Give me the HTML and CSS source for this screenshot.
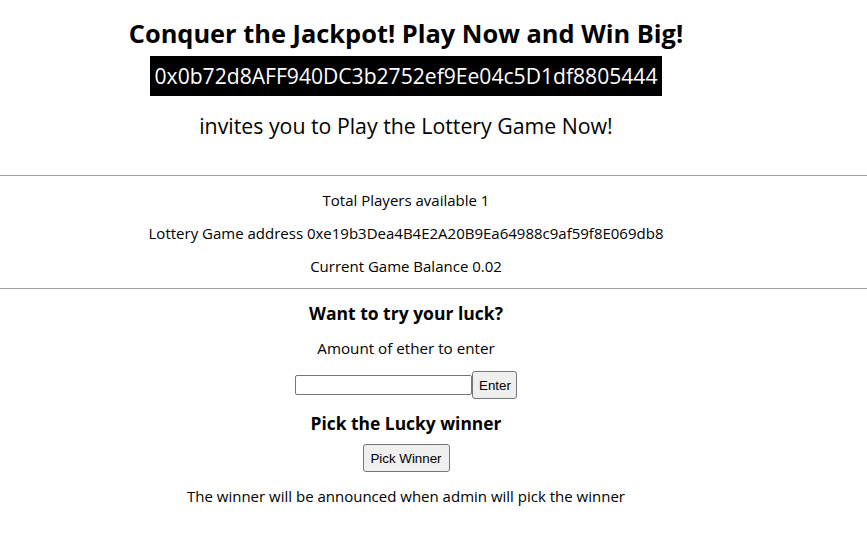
FILE: index.html
```html
<!DOCTYPE html>
<html>
<head>
<meta charset="utf-8">
<link rel="stylesheet" href="styles.css">
<title>Lottery</title>
</head>
<body>
<div class="page">
  <div class="col">
    <h1 class="title">Conquer the Jackpot! Play Now and Win Big!</h1>
    <div class="addr-wrap"><span class="addr">0x0b72d8AFF940DC3b2752ef9Ee04c5D1df8805444</span></div>
    <p class="invite">invites you to Play the Lottery Game Now!</p>
  </div>
  <hr class="rule rule-top">
  <div class="col">
    <p class="info first">Total Players available 1</p>
    <p class="info">Lottery Game address 0xe19b3Dea4B4E2A20B9Ea64988c9af59f8E069db8</p>
    <p class="info">Current Game Balance 0.02</p>
  </div>
  <hr class="rule rule-bottom">
  <div class="col">
    <h3 class="sub first-sub">Want to try your luck?</h3>
    <p class="info amount">Amount of ether to enter</p>
    <div class="row">
      <input class="field" type="text">
      <button class="btn enter">Enter</button>
    </div>
    <h3 class="sub pick-title">Pick the Lucky winner</h3>
    <div class="row pick-row"><button class="btn pick">Pick Winner</button></div>
    <p class="info note">The winner will be announced when admin will pick the winner</p>
  </div>
</div>
</body>
</html>
```
FILE: styles.css
```css
html, body {
  margin: 0;
  padding: 0;
  background: #ffffff;
}
body {
  font-family: "Open Sans", "Noto Sans", sans-serif;
  color: #000;
}
.page {
  display: flex;
  flex-direction: column;
}
.col {
  width: 812px;
  text-align: center;
  display: flex;
  flex-direction: column;
  align-items: center;
}
.title {
  margin: 15px 0 0;
  font-size: 25.4px;
  line-height: 36px;
  font-weight: 700;
}
.addr-wrap {
  margin-top: 5px;
}
.addr {
  display: inline-block;
  background: #000;
  color: #fff;
  font-size: 21.1px;
  height: 40px;
  line-height: 40px;
  padding: 0 5px;
}
.invite {
  margin: 16px 0 0;
  font-size: 21.3px;
  line-height: 28px;
}
.rule {
  border: none;
  height: 1px;
  background: #a0a0a0;
  margin: 0;
  width: 100%;
}
.rule-top {
  margin-top: 35px;
}
.rule-bottom {
  margin-top: 12px;
}
.info {
  margin: 13px 0 0;
  font-size: 15px;
  line-height: 20px;
}
.info.first {
  margin-top: 14px;
}
.sub {
  margin: 12px 0 0;
  font-size: 17.5px;
  line-height: 24px;
  font-weight: 700;
}
.amount {
  margin-top: 13px;
  font-size: 15.2px;
}
.row {
  margin-top: 13px;
  display: flex;
  align-items: center;
  height: 28px;
}
.field {
  width: 177px;
  height: 20px;
  box-sizing: border-box;
  border: 1px solid #767676;
  border-radius: 2px;
  padding: 1px 2px;
  margin: 0;
  font-size: 13px;
}
.btn {
  height: 28px;
  box-sizing: border-box;
  background: #efefef;
  border: 1px solid #767676;
  border-radius: 3px;
  font-family: "Liberation Sans", Arial, sans-serif;
  font-size: 13.33px;
  color: #000;
  margin: 0;
  padding: 0 6px;
}
.enter {
  width: 45px;
}
.pick {
  width: 87px;
}
.pick-title {
  margin-top: 12px;
  font-size: 17.4px;
}
.pick-row {
  margin-top: 9px;
}
.note {
  margin-top: 14px;
}
```
